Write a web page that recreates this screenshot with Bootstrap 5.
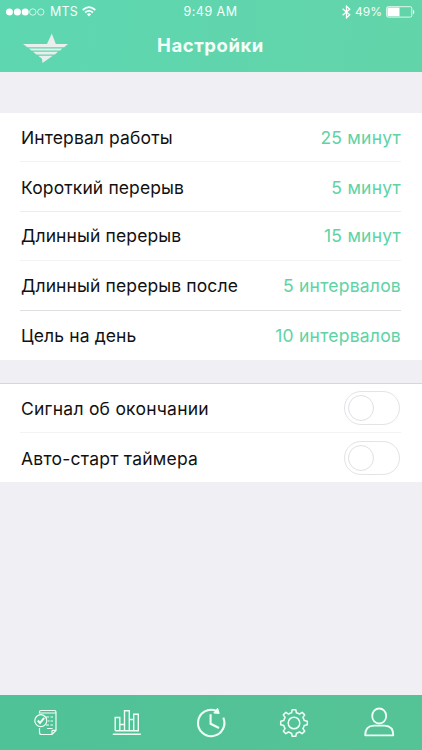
<!DOCTYPE html>
<html lang="ru">
<head>
<meta charset="utf-8">
<meta name="viewport" content="width=device-width, initial-scale=1">
<title>Настройки</title>
<link href="https://cdn.jsdelivr.net/npm/bootstrap@5.3.0/dist/css/bootstrap.min.css" rel="stylesheet">
<style>
body{font-family:Inter,"Noto Sans",sans-serif;background:#efeff4;color:#111;height:750px;overflow:hidden}
.top-area{height:72px;background:linear-gradient(100deg,#5dd7b1,#63d4aa);color:#f4fffa}
.status-row{height:23px;font-size:12px;line-height:23px;padding:0 7px 0 6px}
.status-row svg,.tab-row svg{display:block}
.carrier{font-size:12.5px;letter-spacing:.2px}
.clock{font-size:12.5px;letter-spacing:.47px}
.charge{font-size:12px}
.title-row{height:49px;padding-left:23px}
.page-title{font-size:18.5px;font-weight:700;line-height:44px;letter-spacing:.56px}
.side{flex:1 1 0}
.settings{margin-top:41px}
.switches{margin-top:23px;border-top:1px solid #d6d6dc}
.setting{height:49.4px;margin:0 21px 0 20px;padding:1.4px 0 0 1px;font-size:17.5px;letter-spacing:.12px;border-bottom:1px solid #f3f3f5;line-height:1}
.switches .setting{height:49.1px;letter-spacing:.24px;padding-top:0}
.switches label{padding-top:1.6px}
.setting:last-child{border-bottom:0}
.setting.line-mid{border-color:#ececee}
.setting.line-dark{border-color:#dfdfe1;padding-top:1px}
.setting.raised{padding-top:0;padding-bottom:.4px}
.setting.final-row{padding-top:0}
.amount{color:#5ed3a5;letter-spacing:.24px}
.form-switch .form-check-input.toggle{width:56px;height:34px;margin:0 1px 0 0;background-color:#fff;background-image:none;border:1px solid #e3e3e8;border-radius:17px;position:relative}
.toggle::before{content:"";position:absolute;left:3px;top:3px;width:26px;height:26px;border:1.3px solid #e0e0e6;border-radius:50%}
.tab-row{height:55px;background:linear-gradient(100deg,#50c298,#55c395)}
.tab-row svg{fill:none;stroke:#effff8}
</style>
<script src="https://cdn.jsdelivr.net/npm/bootstrap@5.3.0/dist/js/bootstrap.bundle.min.js"></script>
</head>
<body class="d-flex flex-column">
<header class="top-area">
  <div class="status-row d-flex">
    <div class="side d-flex align-items-center">
      <svg width="40" height="10" viewBox="0 0 40 10"><g fill="#fff"><circle cx="3.4" cy="5" r="3.5"/><circle cx="11.4" cy="5" r="3.5"/><circle cx="19.2" cy="5" r="3.5"/></g><g fill="none" stroke="#fff" stroke-width=".7"><circle cx="26.8" cy="5" r="3.2"/><circle cx="34.8" cy="5" r="3.2"/></g></svg>
      <span class="carrier ms-1">MTS</span>
      <svg class="ms-1" width="14" height="11" viewBox="0 0 14 11"><g fill="none" stroke="#fff" stroke-width="1.7"><path d="M.7 4Q7-1.6 13.3 4M3.1 6.5Q7 3.1 10.9 6.5"/></g><path d="M4.9 8.2Q7 6.5 9.1 8.2L7 10.5Z" fill="#fff"/></svg>
    </div>
    <span class="clock">9:49 AM</span>
    <div class="side d-flex align-items-center justify-content-end">
      <svg width="9" height="14" viewBox="0 0 9 14"><path d="M.6 3.8 7.7 9.8 4.5 12.8V1.2L7.7 4.2.6 10.2" fill="none" stroke="#fff" stroke-width="1.3"/></svg>
      <span class="charge ms-1 me-1">49%</span>
      <svg width="29" height="12" viewBox="0 0 29 12"><rect x=".6" y=".7" width="25.2" height="10.4" rx="1.5" fill="none" stroke="#fff" stroke-width=".8"/><rect x="1.5" y="1.6" width="12" height="8.6" fill="#fff"/><path d="M27 3.5Q29.6 6 27 8.5Z" fill="#fff"/></svg>
    </div>
  </div>
  <div class="title-row d-flex">
    <div class="side"><svg class="d-block mt-2 pt-0" width="46" height="34" viewBox="0 0 46 34" fill="#e9efec"><path d="M0 13H24L28.8 2.5 32.8 13H45L41.2 16.2H4.4ZM6 17.4H39.3L37.2 19.6H8.3ZM10 20.7H35.1L31.8 23.6H13.4ZM15.2 24.8H29.7L19.5 32 19 27.8Z"/></svg></div>
    <h1 class="page-title m-0">Настройки</h1>
    <div class="side pe-4"></div>
  </div>
</header>
<main class="flex-grow-1">
  <section class="settings bg-white">
    <div class="setting d-flex align-items-center justify-content-between"><span>Интервал работы</span><span class="amount">25 минут</span></div>
    <div class="setting line-mid d-flex align-items-center justify-content-between"><span>Короткий перерыв</span><span class="amount">5 минут</span></div>
    <div class="setting raised d-flex align-items-center justify-content-between"><span>Длинный перерыв</span><span class="amount">15 минут</span></div>
    <div class="setting line-dark d-flex align-items-center justify-content-between"><span>Длинный перерыв после</span><span class="amount">5 интервалов</span></div>
    <div class="setting final-row d-flex align-items-center justify-content-between"><span>Цель на день</span><span class="amount">10 интервалов</span></div>
  </section>
  <section class="switches bg-white">
    <div class="setting d-flex align-items-center justify-content-between"><label for="sound">Сигнал об окончании</label><div class="form-check form-switch p-0 m-0 d-flex"><input class="form-check-input toggle" type="checkbox" role="switch" id="sound"></div></div>
    <div class="setting d-flex align-items-center justify-content-between"><label for="auto">Авто-старт таймера</label><div class="form-check form-switch p-0 m-0 d-flex"><input class="form-check-input toggle" type="checkbox" role="switch" id="auto"></div></div>
  </section>
</main>
<nav class="tab-row d-flex justify-content-between align-items-center">
  <svg width="84" height="55" viewBox="0 0 84 55" stroke-width="1.2"><path d="M39.5 18.5V17Q39.5 15.5 41 15.5H54.5Q56 15.5 56 17V35.5L52 39.5H41.5Q39.5 39.5 39.5 37.5V33M40 18H56M52 39V36Q52 35.3 53 35.3H56M47 33.5H52.5"/><path d="M46 22H49M50.5 22H53M48 26H49.5M50.5 26H53M46 30H49M50.5 30H53"/><circle cx="40.8" cy="25.7" r="6"/><path d="M37.8 25.5 40 28 44.2 22.8" stroke-width="2"/></svg>
  <svg width="84" height="55" viewBox="84 0 84 55" stroke-width="1.4"><path d="M112.8 39.3H140.8M115.2 35.7V22.5H119.8V35.7M119.8 29.5H124.5M124.5 35.7V15.8H129.3V35.7M129.3 24.5H133.7M133.7 35.7V19.3H138.3V35.7ZM115.2 35.7H134"/></svg>
  <svg width="84" height="55" viewBox="168 0 84 55" stroke-width="2.1"><path d="M216 15.7A13.2 13.2 0 1 0 223.3 22.7M210.6 19.2V28.8L219 33"/><path d="M217.6 13.2 219.2 18.4 213.8 18Z" fill="#effff8" stroke-width="1"/></svg>
  <svg width="84" height="55" viewBox="-42 -28 84 55" stroke-width="1.5" stroke-linejoin="round"><path d="M-2.4-10.2-1.8-13.3H1.8L2.4-10.2Q4-10 5.5-8.9L8.1-10.7 10.7-8.1 8.9-5.5Q10-4 10.2-2.4L13.3-1.8V1.8L10.2 2.4Q10 4 8.9 5.5L10.7 8.1 8.1 10.7 5.5 8.9Q4 10 2.4 10.2L1.8 13.3H-1.8L-2.4 10.2Q-4 10-5.5 8.9L-8.1 10.7-10.7 8.1-8.9 5.5Q-10 4-10.2 2.4L-13.3 1.8V-1.8L-10.2-2.4Q-10-4-8.9-5.5L-10.7-8.1-8.1-10.7-5.5-8.9Q-4-10-2.4-10.2Z"/><circle r="5.8"/></svg>
  <svg width="86" height="55" viewBox="336 0 86 55" stroke-width="1.8"><ellipse cx="379.2" cy="21" rx="7" ry="7.5"/><path d="M365.2 40.3Q365.2 30.7 374 30.7H384.5Q393.3 31 393.3 40.3Z" stroke-linejoin="round"/></svg>
</nav>
</body>
</html>
